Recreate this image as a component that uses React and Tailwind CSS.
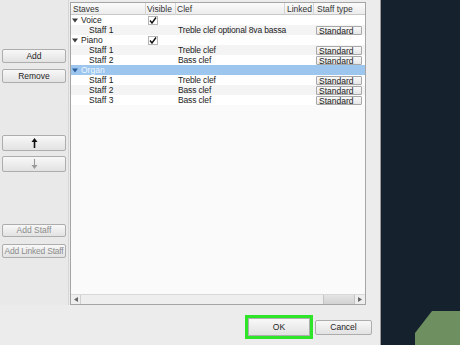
const rows = [
  { name: "Voice", group: true, visible: true },
  { name: "Staff 1", clef: "Treble clef optional 8va bassa", type: true },
  { name: "Piano", group: true, visible: true },
  { name: "Staff 1", clef: "Treble clef", type: true },
  { name: "Staff 2", clef: "Bass clef", type: true },
  { name: "Organ", group: true, selected: true },
  { name: "Staff 1", clef: "Treble clef", type: true },
  { name: "Staff 2", clef: "Bass clef", type: true },
  { name: "Staff 3", clef: "Bass clef", type: true },
];

const cols = "grid grid-cols-[75px_30px_109px_29px_1fr]";

function Btn({ children, className = "", disabled }) {
  return (
    <div
      className={`flex items-center justify-center whitespace-nowrap rounded-[2px] border border-[#adadad] bg-gradient-to-b from-[#f8f8f8] to-[#e2e2e2] text-[8.5px] leading-none ${
        disabled ? "text-[#8c8c8c]" : "text-[#1e1e1e]"
      } ${className}`}
    >
      {children}
    </div>
  );
}

function Arrow({ up, color }) {
  return (
    <svg width="7" height="10" viewBox="0 0 7 10">
      <g transform={up ? "" : "rotate(180 3.5 5)"}>
        <path d="M3.5 2 L3.5 10" stroke={color} strokeWidth={up ? 1.6 : 1.1} />
        <path d="M0.5 4 L3.5 0 L6.5 4 Z" fill={color} />
      </g>
    </svg>
  );
}

function Triangle({ color = "#3a3a3a" }) {
  return (
    <svg width="6" height="5" viewBox="0 0 6 5" className="mr-[3px] ml-[1px]">
      <path d="M0 0.5 L6 0.5 L3 4.5 Z" fill={color} />
    </svg>
  );
}

function Check() {
  return (
    <div className="ml-[2px] flex h-[9px] w-[10px] items-center justify-center border border-[#b5b5b5] bg-white">
      <svg width="8" height="7" viewBox="0 0 8 7">
        <path d="M1 3.5 L3 6 L7 0.5" stroke="#111" strokeWidth="1.4" fill="none" />
      </svg>
    </div>
  );
}

export default function App() {
  return (
    <div className="flex h-[345px] w-[460px] overflow-hidden [font-family:'Liberation_Sans',Arial,sans-serif]">
      <div className="flex w-[381px] flex-col border-r border-[#9a9a9a] bg-[#ececec]">
        <div className="flex h-[305px]">
          {/* left buttons */}
          <div className="flex w-[69px] flex-col border-r border-[#d6d6d6] bg-[#e9e9e9] px-[2px]">
            <Btn className="mt-[49px] h-[14px]">Add</Btn>
            <Btn className="mt-[6px] h-[14px]">Remove</Btn>
            <Btn className="mt-[52px] h-[16px]">
              <Arrow up color="#111" />
            </Btn>
            <Btn className="mt-[5px] h-[16px]" disabled>
              <Arrow color="#9a9a9a" />
            </Btn>
            <Btn className="mt-[52px] h-[13px]" disabled>
              Add Staff
            </Btn>
            <Btn className="mt-[7px] h-[14px] tracking-[-0.2px]" disabled>
              Add Linked Staff
            </Btn>
          </div>

          {/* table */}
          <div className="ml-[1px] mt-[2px] flex w-[296px] flex-col border border-[#a5a5a5] bg-[#fafafa]">
            <div className={`${cols} h-[12px] border-b border-[#c8c8c8] bg-gradient-to-b from-[#fbfbfb] to-[#ececec] text-[8.5px] leading-[12px] text-[#333]`}>
              <div className="border-r border-[#d4d4d4] pl-[2px]">Staves</div>
              <div className="border-r border-[#d4d4d4] pl-[1px]">Visible</div>
              <div className="border-r border-[#d4d4d4] pl-[1px]">Clef</div>
              <div className="border-r border-[#d4d4d4] pl-[2px]">Linked</div>
              <div className="pl-[3px]">Staff type</div>
            </div>
            <div className="flex-1">
              {rows.map((r, i) => (
                <div
                  key={i}
                  className={`${cols} h-[10px] items-center whitespace-nowrap text-[8.5px] leading-[10px] ${
                    r.selected ? "bg-[#9cc6ee]" : i % 2 ? "bg-[#f4f4f4]" : "bg-white"
                  }`}
                >
                  <div className="flex items-center">
                    {r.group ? (
                      <>
                        <Triangle color={r.selected ? "#2a5d9a" : "#3a3a3a"} />
                        <span className={r.selected ? "text-[#eef6ff]" : "text-[#222]"}>{r.name}</span>
                      </>
                    ) : (
                      <span className="pl-[18px] text-[#222]">{r.name}</span>
                    )}
                  </div>
                  <div>{r.visible && <Check />}</div>
                  <div className="pl-[2px] tracking-[-0.15px] text-[#222]">{r.clef}</div>
                  <div />
                  <div className="pr-[3px]">
                    {r.type && (
                      <div className="ml-[2px] h-[9px] rounded-[1px] border border-[#a8a8a8] bg-gradient-to-b from-[#fafafa] to-[#e6e6e6] pl-[2px] text-[8.5px] leading-[8px] text-[#222]">
                        Standard
                      </div>
                    )}
                  </div>
                </div>
              ))}
            </div>
            {/* horizontal scrollbar */}
            <div className="flex h-[10px] border-t border-[#d8d8d8] bg-[#eeeeee]">
              <div className="flex w-[10px] items-center justify-center border-r border-[#d0d0d0]">
                <svg width="4" height="5" viewBox="0 0 4 5">
                  <path d="M4 0 L0 2.5 L4 5 Z" fill="#666" />
                </svg>
              </div>
              <div className="flex-1" />
              <div className="w-[32px] border-x border-[#c4c4c4] bg-gradient-to-b from-[#e4e4e4] to-[#d2d2d2]" />
              <div className="flex w-[10px] items-center justify-center">
                <svg width="4" height="5" viewBox="0 0 4 5">
                  <path d="M0 0 L4 2.5 L0 5 Z" fill="#666" />
                </svg>
              </div>
            </div>
          </div>
        </div>

        {/* bottom buttons */}
        <div className="mt-[10px] flex">
          <div className="ml-[245px] flex h-[24px] w-[68px] border-[3px] border-[#2ee52a]">
            <Btn className="h-full w-full rounded-none border-[#8a8a8a]">OK</Btn>
          </div>
          <Btn className="ml-[2px] mt-[5px] h-[15px] w-[57px]">Cancel</Btn>
        </div>
      </div>

      {/* desktop background */}
      <div className="relative flex-1 bg-[#16212e]">
        <svg className="absolute bottom-0 right-0" width="45" height="34" viewBox="0 0 45 34">
          <path d="M17 0 L45 0 L45 34 L0 34 L0 22 Z" fill="#6e8f5f" />
        </svg>
      </div>
    </div>
  );
}
